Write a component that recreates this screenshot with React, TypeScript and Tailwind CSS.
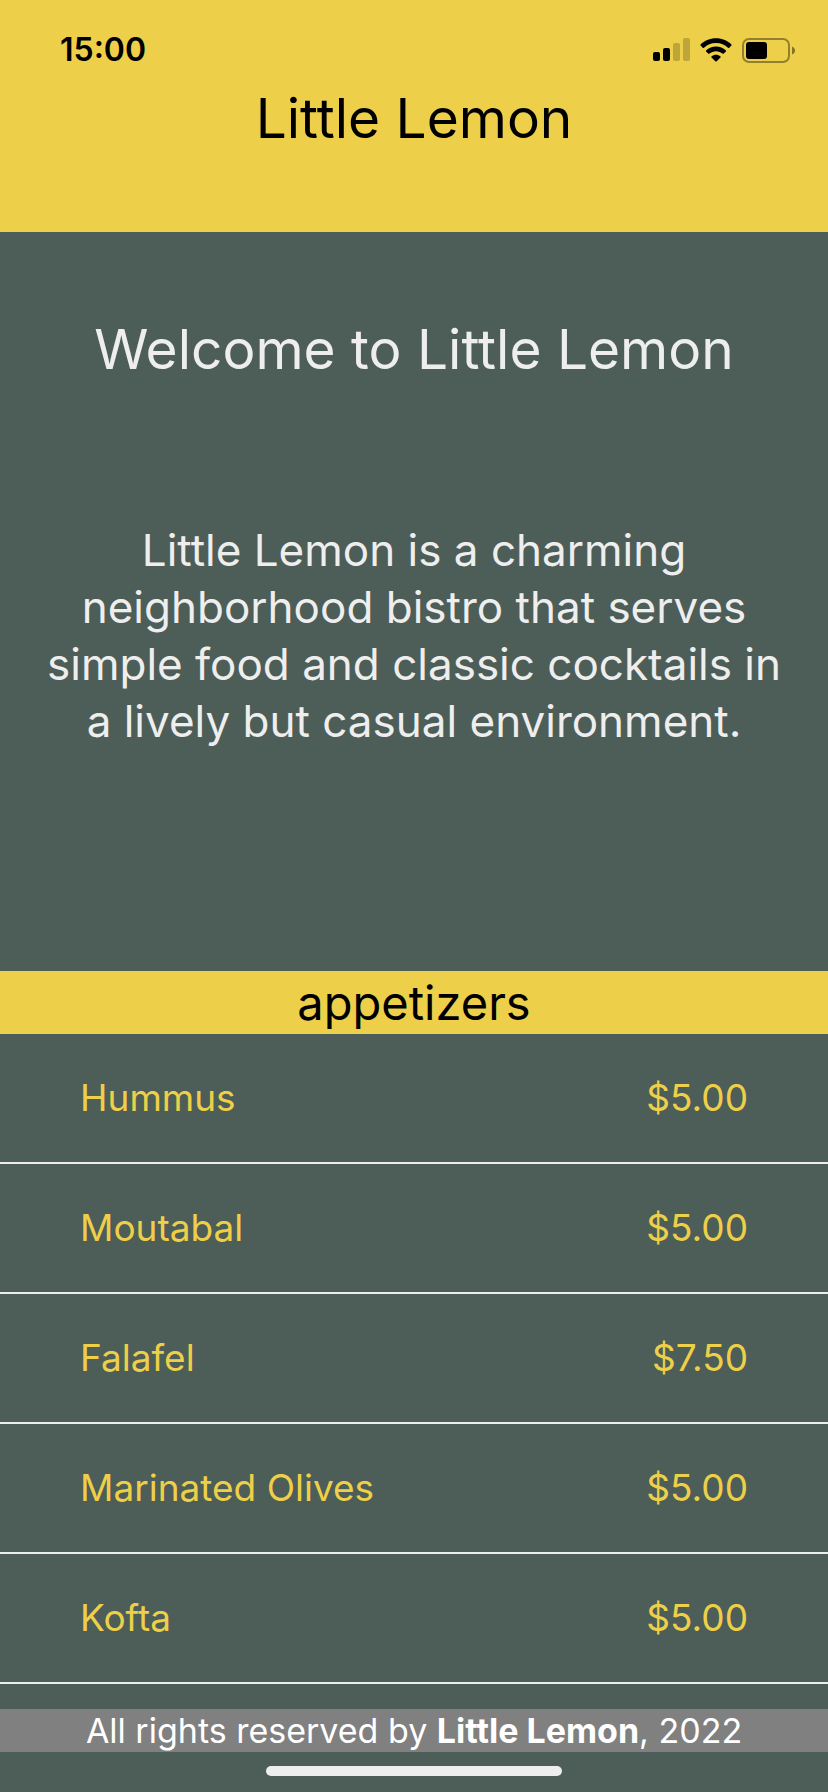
type MenuItem = { name: string; price: string };

const appetizers: MenuItem[] = [
  { name: 'Hummus', price: '$5.00' },
  { name: 'Moutabal', price: '$5.00' },
  { name: 'Falafel', price: '$7.50' },
  { name: 'Marinated Olives', price: '$5.00' },
  { name: 'Kofta', price: '$5.00' },
];

function SignalIcon() {
  return (
    <svg width="37" height="24" viewBox="0 0 37 24" aria-hidden="true">
      <rect x="0" y="14" width="7" height="9" rx="2" />
      <rect x="10" y="10" width="7" height="13" rx="2" />
      <rect x="20" y="5" width="7" height="18" rx="2" opacity="0.2" />
      <rect x="30" y="0" width="7" height="23" rx="2" opacity="0.2" />
    </svg>
  );
}

function WifiIcon() {
  return (
    <svg width="32" height="24" viewBox="0 0 32 24" aria-hidden="true">
      <path d="M16 0.2C22.2 0.2 27.6 2.6 31.4 6.4C31.8 6.8 31.8 7.2 31.4 7.6L29.3 9.7C28.9 10.1 28.4 10.1 28 9.7C24.9 6.8 20.7 5 16 5C11.3 5 7.1 6.8 4 9.7C3.6 10.1 3.1 10.1 2.7 9.7L0.6 7.6C0.2 7.2 0.2 6.8 0.6 6.4C4.4 2.6 9.8 0.2 16 0.2Z" />
      <path d="M16 8.6C19.8 8.6 23.3 10 25.9 12.4C26.3 12.8 26.3 13.2 25.9 13.6L23.8 15.6C23.4 16 23 16 22.6 15.6C20.8 14.1 18.5 13.2 16 13.2C13.5 13.2 11.2 14.1 9.4 15.6C9 16 8.6 16 8.2 15.6L6.1 13.6C5.7 13.2 5.7 12.8 6.1 12.4C8.7 10 12.2 8.6 16 8.6Z" />
      <path d="M16 16.8C17.7 16.8 19.3 17.4 20.5 18.4C20.9 18.8 20.9 19.1 20.5 19.5L16.7 23.3C16.3 23.7 15.7 23.7 15.3 23.3L11.5 19.5C11.1 19.1 11.1 18.8 11.5 18.4C12.7 17.4 14.3 16.8 16 16.8Z" />
    </svg>
  );
}

function BatteryIcon() {
  return (
    <svg width="54" height="25" viewBox="0 0 54 25" aria-hidden="true">
      <rect x="1" y="1" width="46" height="23" rx="6" fill="none" stroke="#000" strokeWidth="2" opacity="0.38" />
      <rect x="4" y="4" width="21" height="17" rx="3" />
      <path d="M50 8.5C51.8 9.2 53 10.7 53 12.5C53 14.3 51.8 15.8 50 16.5Z" opacity="0.45" />
    </svg>
  );
}

function StatusBar() {
  return (
    <div className="flex h-25 items-center justify-between pr-8 pl-15">
      <time className="text-[32px] leading-10 font-semibold">15:00</time>
      <div className="flex items-center gap-2.5">
        <SignalIcon />
        <WifiIcon />
        <BatteryIcon />
      </div>
    </div>
  );
}

export default function App() {
  return (
    <div className="flex min-h-screen flex-col bg-[#4d5d57] font-['Inter',sans-serif] text-black">
      <header className="bg-[#edcf49] pb-20">
        <StatusBar />
        <h1 className="-mt-4 text-center text-[55px] leading-17">Little Lemon</h1>
      </header>

      <main className="grow">
        <section className="px-10 pt-20 pb-[221px] text-center text-[#eeeeee]">
          <h2 className="text-[55px] leading-[74px]">Welcome to Little Lemon</h2>
          <p className="mt-34 text-[44px] leading-[57px]">
            Little Lemon is a charming neighborhood bistro that serves simple food and classic
            cocktails in a lively but casual environment.
          </p>
        </section>

        <section>
          <h2 className="bg-[#edcf49] text-center text-[47px] leading-[63px]">appetizers</h2>
          <ul>
            {appetizers.map((item) => (
              <li
                key={item.name}
                className="flex items-center justify-between border-b-2 border-[#eeeeee] px-20 py-10 text-[37px] leading-12 text-[#edcf49]"
              >
                <span>{item.name}</span>
                <span>{item.price}</span>
              </li>
            ))}
          </ul>
        </section>
      </main>

      <footer>
        <p className="bg-[#808080] text-center text-[34px] leading-[43px] text-white">
          All rights reserved by <strong className="font-bold">Little Lemon</strong>, 2022
        </p>
        <div className="flex h-10 items-center justify-center pb-2 pt-1.5">
          <div className="h-2.5 w-74 rounded-full bg-[#eeeeee]" />
        </div>
      </footer>
    </div>
  );
}
